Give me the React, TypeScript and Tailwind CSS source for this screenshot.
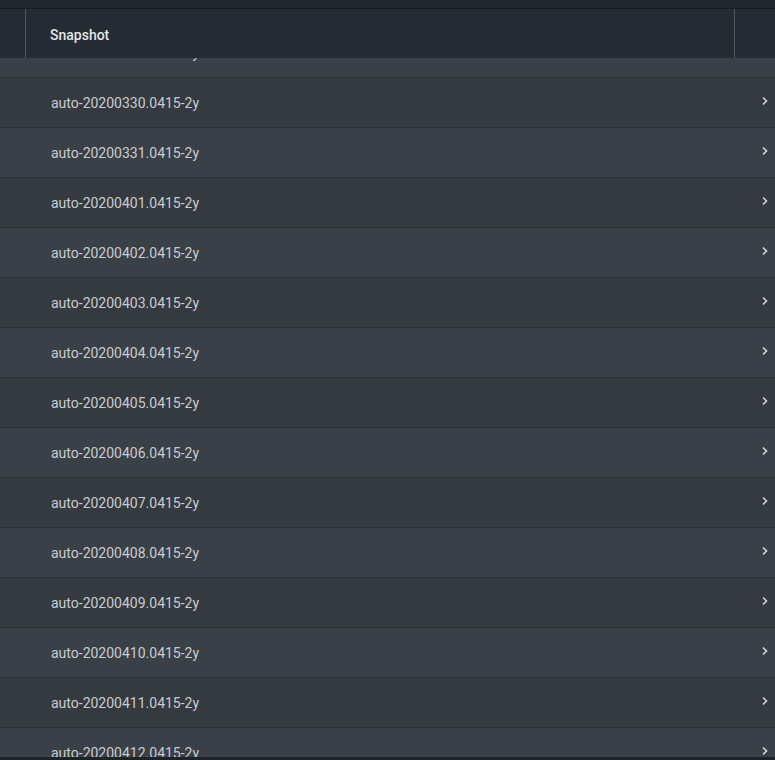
const snapshots = [
  'auto-20200329.0415-2y',
  'auto-20200330.0415-2y',
  'auto-20200331.0415-2y',
  'auto-20200401.0415-2y',
  'auto-20200402.0415-2y',
  'auto-20200403.0415-2y',
  'auto-20200404.0415-2y',
  'auto-20200405.0415-2y',
  'auto-20200406.0415-2y',
  'auto-20200407.0415-2y',
  'auto-20200408.0415-2y',
  'auto-20200409.0415-2y',
  'auto-20200410.0415-2y',
  'auto-20200411.0415-2y',
  'auto-20200412.0415-2y',
  'auto-20200413.0415-2y',
]

function Chevron() {
  return (
    <svg width="8" height="10" viewBox="0 0 8 10" className="text-[#d4d7da]">
      <path d="M2 1.5 L5.5 5 L2 8.5" fill="none" stroke="currentColor" strokeWidth="1.6" />
    </svg>
  )
}

export default function App() {
  return (
    <div
      className="flex h-[760px] w-[775px] flex-col overflow-hidden bg-[#343a40]"
      style={{ fontFamily: 'Roboto, "Liberation Sans", sans-serif' }}
    >
      <div className="h-[9px] shrink-0 border-b border-[#181c21] bg-[#21272d]" />

      <div className="flex h-[49px] shrink-0 bg-[#252b32]">
        <div className="w-[26px] border-r border-[#50565c]" />
        <div className="flex flex-1 items-center border-r border-[#50565c] pl-6 pt-[3px] text-[14px] font-medium text-[#e3e5e7]">
          Snapshot
        </div>
        <div className="w-[40px]" />
      </div>

      <div className="flex-1 overflow-hidden">
        <div className="-mt-[30px]">
          {snapshots.map((name, i) => (
            <div
              key={name}
              className={
                'flex h-[50px] items-center border-b border-[#2c3136] pl-[51px] pr-[6px] ' +
                (i % 2 === 0 ? 'bg-[#3a4047]' : 'bg-[#343a40]')
              }
            >
              <span className="flex-1 pt-[1px] text-[14px] text-[#c9ccd0]">{name}</span>
              <span className="-mt-[4px]">
                <Chevron />
              </span>
            </div>
          ))}
        </div>
      </div>

      <div className="h-[3px] shrink-0 bg-[#1e2328]" />
    </div>
  )
}
